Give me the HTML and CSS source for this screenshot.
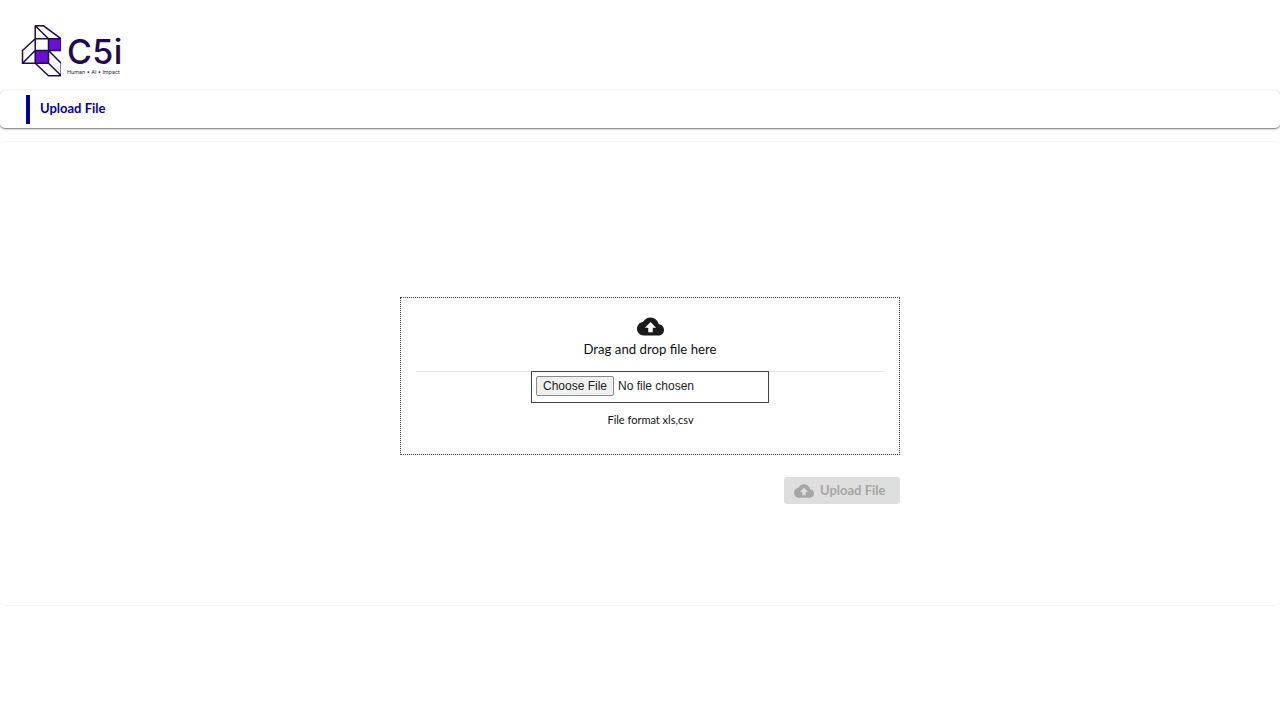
FILE: index.html
```html
<!DOCTYPE html>
<html lang="en">
<head>
<meta charset="utf-8">
<title>Upload File</title>
<link rel="stylesheet" href="styles.css">
</head>
<body>
<header class="brand">
  <svg class="brand-mark" width="40" height="52" viewBox="20.5 24.5 40 52" aria-hidden="true">
    <rect class="fill" x="48" y="38.3" width="12.7" height="11.7"/>
    <rect class="fill" x="34.7" y="50" width="13.3" height="12.7"/>
    <path class="line" d="M34.7 25.3H43L60.7 38.3V50H34.7V38.3M34.7 25.3V38.3H60.7M34.7 25.3L48 38.3V62.7M48 50L60.7 62.7V75.3H48L34.7 62.7V50M48 62.7L60.7 75.3M34.7 38.3L22 50V62.7H48M34.7 50L22 62.7"/>
  </svg>
  <div class="brand-text">
    <span class="brand-name">C5i</span>
    <span class="brand-tag">Human • AI • Impact</span>
  </div>
</header>
<nav class="tabbar">
  <span class="tab-mark"></span>
  <h1 class="tab-title">Upload File</h1>
</nav>
<main class="panel">
  <section class="dropzone">
    <svg class="drop-icon" width="27" height="27" viewBox="0 0 24 24" aria-hidden="true">
      <path d="M19.35 10.04C18.67 6.59 15.64 4 12 4 9.11 4 6.6 5.64 5.35 8.04 2.34 8.36 0 10.91 0 14c0 3.31 2.69 6 6 6h13c2.76 0 5-2.24 5-5 0-2.64-2.05-4.78-4.65-4.96zM14 13v4h-4v-4H7l5-5 5 5h-3z"/>
    </svg>
    <p class="drop-label">Drag and drop file here</p>
    <hr class="drop-rule">
    <input class="file-input" type="file">
    <p class="drop-hint">File format xls,csv</p>
  </section>
  <div class="actions">
    <button class="upload-btn" type="button" disabled>
      <svg width="20" height="20" viewBox="0 0 24 24" aria-hidden="true">
        <path d="M19.35 10.04C18.67 6.59 15.64 4 12 4 9.11 4 6.6 5.64 5.35 8.04 2.34 8.36 0 10.91 0 14c0 3.31 2.69 6 6 6h13c2.76 0 5-2.24 5-5 0-2.64-2.05-4.78-4.65-4.96zM14 13v4h-4v-4H7l5-5 5 5h-3z"/>
      </svg>
      <span class="upload-label">Upload File</span>
    </button>
  </div>
</main>
</body>
</html>
```
FILE: styles.css
```css
* { box-sizing: border-box; }
html, body { margin: 0; padding: 0; background: #fff; }
body { font-family: Lato, "Liberation Sans", sans-serif; color: #111; height: 720px; overflow: hidden; }

.brand { height: 90px; display: flex; align-items: flex-start; padding: 25px 0 0 21px; }
.brand-mark { display: block; flex: none; }
.brand-text { display: flex; flex-direction: column; margin: 12px 0 0 6px; }
.brand-name { font-family: Inter, sans-serif; font-size: 34px; line-height: 30px; font-weight: 500; color: #1f0a4f; letter-spacing: .4px; }
.brand-tag { font-family: Inter, sans-serif; font-size: 5.4px; line-height: 7px; margin: 2px 0 0; color: #2a1c55; white-space: nowrap; }
.fill { fill: #6a0fd8; }
.line { fill: none; stroke: #1f0a4f; stroke-width: 1.5; }

.tabbar { height: 38px; display: flex; align-items: center; gap: 10px; padding: 0 0 0 26px;
  border-top: 1px solid #f7f7f7; border-radius: 5px; background: #fff; box-shadow: 0 1px 2px rgba(0,0,0,.55); }
.tab-mark { width: 4px; height: 29px; background: #00009c; }
.tab-title { margin: 0 0 4px; font-size: 13px; font-weight: 700; color: #00009c; }

.panel { margin-top: 13px; height: 465px; padding: 155px 380px 0 400px; border-top: 1px solid #f6f6f6; border-bottom: 1px solid #f6f6f6; border-radius: 6px; }
.dropzone { width: 500px; height: 158px; border: 1px dotted #444; display: flex; flex-direction: column; align-items: center; padding-top: 15px; }
.drop-icon { display: block; fill: #1b1b1b; flex: none; }
.drop-label { margin: 0; font-size: 13.2px; line-height: 18px; color: #111; }
.drop-rule { width: 468px; height: 1px; margin: 13px 0 0; border: 0; background: #e8e8e8; flex: none; }
.file-input { width: 238px; height: 32px; margin: -1px 0 0; padding: 4px; border: 1px solid #444; font-family: "Liberation Sans", sans-serif; font-size: 12px; color: #222; }
.file-input::file-selector-button { width: 78px; height: 20px; margin-right: 4px; padding: 0; border: 1px solid #8a8a8a; border-radius: 2px; background: #f0f0f0; color: #222; font: inherit; }
.drop-hint { margin: 10px 0 0 1px; font-size: 11px; line-height: 14px; color: #111; }

.actions { display: flex; justify-content: flex-end; margin-top: 22px; }
.upload-btn { width: 116px; height: 27px; display: flex; align-items: center; gap: 6px; padding: 0 0 0 10px; border: 0; border-radius: 3px; background: #dedede; color: #a6a6a6; fill: #a6a6a6; font-family: Lato, sans-serif; font-size: 13px; font-weight: 700; }
.upload-btn svg { display: block; flex: none; }
.upload-label { margin-bottom: 2px; }
```
